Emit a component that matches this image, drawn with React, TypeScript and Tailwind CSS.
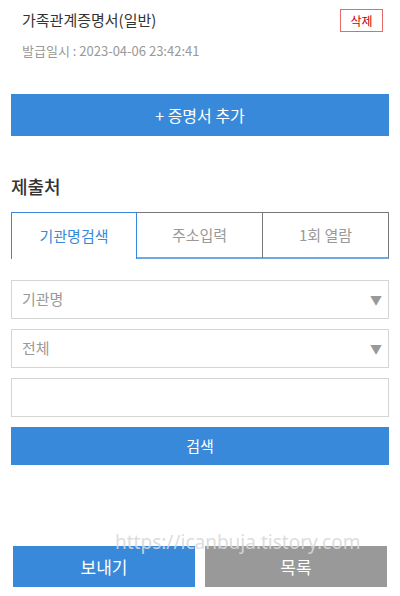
const font = { fontFamily: '"Noto Sans CJK KR", "Noto Sans", sans-serif' };

const Tab = ({ label, active }: { label: string; active?: boolean }) => {
  if (active) {
    return (
      <div className="h-[47px] flex items-center justify-center border border-b-0 border-[#3889d9] text-[15px] text-[#3889d9]">
        {label}
      </div>
    );
  }
  return (
    <div className="h-[47px] flex items-center justify-center border-t border-r border-[#777] border-b-2 border-b-[#6fa9e3] text-[15px] text-[#999]">
      {label}
    </div>
  );
};

const SelectBox = ({ label }: { label: string }) => (
  <div className="h-[39px] border border-[#d5d5d5] flex items-center justify-between pl-[10px] pr-[6px]">
    <span className="text-[15px] text-[#999]">{label}</span>
    <span className="text-[12px] text-[#999]">▼</span>
  </div>
);

export default function App() {
  return (
    <div className="relative w-[400px] h-[596px] bg-white overflow-hidden" style={font}>
      {/* certificate item */}
      <div className="pt-[9px] pl-[22px] pr-[17px]">
        <div className="flex justify-between items-start">
          <span className="text-[15px] leading-[22px] text-[#333]">가족관계증명서(일반)</span>
          <button className="h-[23px] w-[43px] border border-[#e56a6a] text-[12px] leading-none text-[#cc0000] flex items-center justify-center">
            삭제
          </button>
        </div>
        <div className="mt-[9px] text-[13px] leading-[20px] text-[#999]">발급일시 : 2023-04-06 23:42:41</div>
      </div>

      <div className="px-[11px]">
        <button className="mt-[33px] w-full h-[42px] bg-[#3889d9] text-white text-[16px]">+ 증명서 추가</button>

        {/* submit target */}
        <h2 className="mt-[37px] text-[18px] leading-[26px] font-medium text-[#333]">제출처</h2>
        <div className="mt-[13px] grid grid-cols-3">
          <Tab label="기관명검색" active />
          <Tab label="주소입력" />
          <Tab label="1회 열람" />
        </div>

        <div className="mt-[21px] flex flex-col gap-[10px]">
          <SelectBox label="기관명" />
          <SelectBox label="전체" />
          <div className="h-[39px] border border-[#d5d5d5]" />
          <button className="h-[38px] bg-[#3889d9] text-white text-[15px]">검색</button>
        </div>
      </div>

      {/* bottom buttons */}
      <div className="mt-[81px] px-[13px] flex gap-[10px]">
        <button className="flex-1 h-[41px] bg-[#3889d9] text-white text-[17px]">보내기</button>
        <button className="flex-1 h-[41px] bg-[#999] text-white text-[17px]">목록</button>
      </div>

      {/* watermark */}
      <div className="absolute left-[115px] top-[528px] text-[19px] text-[#d9d9d9]/90 pointer-events-none" style={{ fontFamily: '"Noto Sans", sans-serif' }}>
        https://icanbuja.tistory.com
      </div>
    </div>
  );
}
